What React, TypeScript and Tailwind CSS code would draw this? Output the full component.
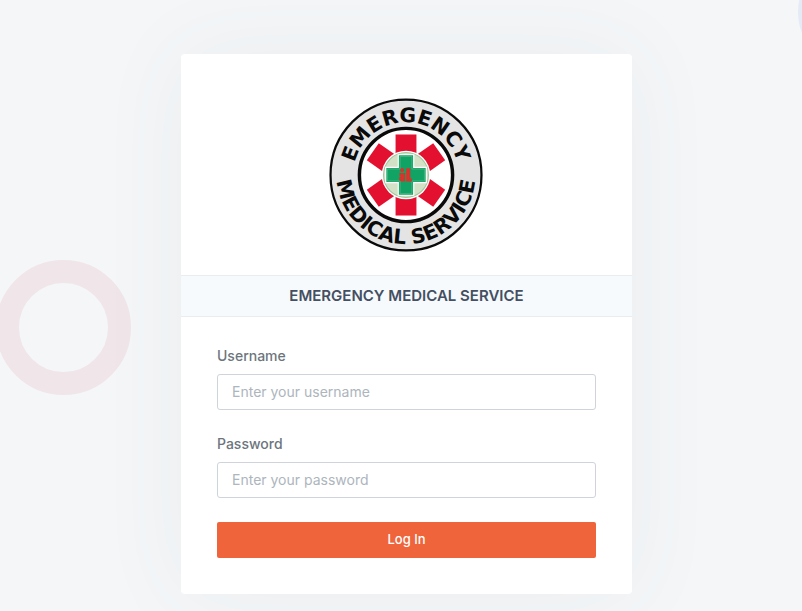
import { useState } from 'react';
import type { FormEvent } from 'react';

const arms = [0, 55, -55, 180, 125, -125];

function Logo() {
  return (
    <svg viewBox="-76 -76 152 152" className="h-[154px] w-[154px]" role="img" aria-label="Emergency Medical Service">
      <defs>
        <path id="arc-top" d="M-52,0 A52,52 0 0,1 52,0" />
        <path id="arc-bottom" d="M-67.5,-12 A68.5,68.5 0 1,0 67.5,-12" />
      </defs>
      <circle r="74.5" fill="#e4e4e4" stroke="#0a0a0a" strokeWidth="2.2" />
      <circle r="46" fill="#fff" stroke="#0a0a0a" strokeWidth="3.4" />
      {arms.map(a => <rect key={a} x="-10.3" y="-40" width="20.6" height="26" fill="#e4102f" transform={`rotate(${a})`} />)}
      <circle r="24" fill="#fff" />
      <circle r="22.2" fill="#d3e2c6" stroke="#9cc79b" strokeWidth="1" />
      <path d="M-8.2,-20.6H8.2V-8.2H20.6V8.2H8.2V20.6H-8.2V8.2H-20.6V-8.2H-8.2Z" fill="#fff" />
      <path d="M-7,-19.4H7V-7H19.4V7H7V19.4H-7V7H-19.4V-7H-7Z" fill="#11a364" />
      <path d="M-5.8,-18.2H5.8V-5.8H18.2V5.8H5.8V18.2H-5.8V5.8H-18.2V-5.8H-5.8Z" fill="none" stroke="#7fcba6" strokeWidth="0.4" />
      <g fill="#d8342c">
        <circle cx="-3.8" cy="-5" r="2" />
        <path d="M-6.4,-2H-0.8V6.4H-4.2A2.6,2.6 0 0,1 -4.2,1.2H-6.4Z" />
        <path d="M0.2,-6.6H4.2V3.4H5.8V6.4H0.2Z" />
      </g>
      <g fill="#0a0a0a" fontSize="20" textAnchor="middle" className="font-['DejaVu_Sans',sans-serif] font-bold">
        <text><textPath href="#arc-top" startOffset="50%">EMERGENCY</textPath></text>
        <text><textPath href="#arc-bottom" startOffset="50%">MEDICAL SERVICE</textPath></text>
      </g>
    </svg>
  );
}

type FieldProps = { id: string; label: string; type: string; value: string; onChange: (v: string) => void };

function Field({ id, label, type, value, onChange }: FieldProps) {
  return (
    <div className="flex flex-col gap-2">
      <label htmlFor={id} className="text-[14px] leading-5 font-medium text-[#6c757d]">{label}</label>
      <input id={id} name={id} type={type} value={value} onChange={e => onChange(e.target.value)} placeholder={`Enter your ${id}`} className="h-9 w-full rounded-[3px] border border-[#ced4da] bg-white px-3.5 pb-0.5 text-[14px] text-[#6c757d] placeholder:text-[#adb5bd] outline-none focus:border-[#b1bbc4]" />
    </div>
  );
}

export default function App() {
  const [username, setUsername] = useState('');
  const [password, setPassword] = useState('');

  const submit = (e: FormEvent) => { e.preventDefault(); };

  return (
    <div className="relative min-h-screen overflow-hidden bg-[#f4f6f8] pt-[54px] pb-4 pl-[11px] font-['Inter',sans-serif]">
      <div className="absolute top-[260px] -left-1 h-[135px] w-[135px] rounded-full border-[23px] border-[#f0e5e9]" />
      <div className="absolute -top-[45px] left-[798px] h-[114px] w-[114px] rounded-full bg-[#e5ebf6]" />

      <main className="relative mx-auto w-full max-w-[451px] rounded bg-white shadow-[0_0_90px_rgba(90,95,100,0.06)]">
        <div className="flex justify-center pt-11 pr-0.5 pb-[23px]"><Logo /></div>
        <div className="border-y border-[#e9edf0] bg-[#f6fafc] py-2.5 text-center">
          <h1 className="text-[15px] leading-5 font-semibold text-[#444f62]">EMERGENCY MEDICAL SERVICE</h1>
        </div>
        <form onSubmit={submit} className="flex flex-col gap-6 px-9 pt-[29px] pb-9">
          <Field id="username" label="Username" type="text" value={username} onChange={setUsername} />
          <Field id="password" label="Password" type="password" value={password} onChange={setPassword} />
          <button type="submit" className="h-9 rounded-[2px] bg-[#f0643b] text-[13px] font-medium text-white hover:bg-[#e2572e]">Log In</button>
        </form>
      </main>
    </div>
  );
}
